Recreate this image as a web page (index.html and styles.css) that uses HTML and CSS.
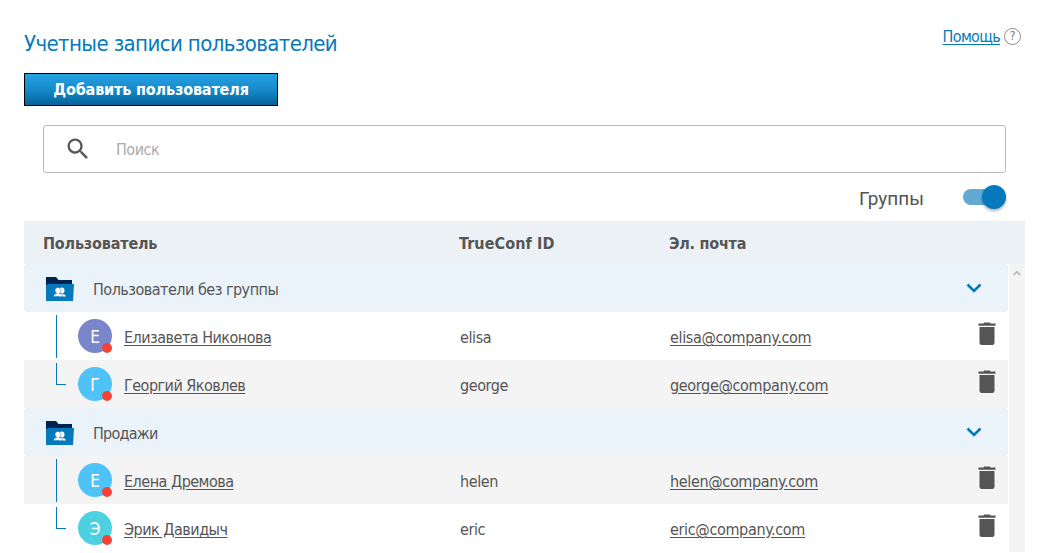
FILE: index.html
```html
<!DOCTYPE html>
<html lang="ru">
<head>
<meta charset="utf-8">
<title>Учетные записи пользователей</title>
<link rel="stylesheet" href="styles.css">
</head>
<body>
<svg class="defs" width="0" height="0" aria-hidden="true">
  <symbol id="trash" viewBox="0 0 18 24"><path fill="#555" d="M.5 1.400h5L6.200.5h5.600l.7.9h5v2.400H.5zM1.500 5h15v15.800a2.200 2.200 0 0 1-2.200 2.200H3.700a2.200 2.200 0 0 1-2.200-2.200z"/></symbol>
  <symbol id="folder" viewBox="0 0 28 24"><path fill="#002450" d="M0 0h10l2.500 3H26v6H0z"/><path fill="#0579bc" d="M1.500 7H28l-1 17H0V9z"/><g fill="#fff"><ellipse cx="15.800" cy="13.600" rx="2.700" ry="3"/><path d="M13 19.400v-2.500h3c2.600 0 3.800 1.100 3.800 2.500z"/></g><path fill="#fff" stroke="#0579bc" stroke-width=".5" d="M7.600 19.600c0-2 1.400-2.800 3.200-3.100-1.400-1-1.700-2-1.700-3 0-1.900 1-3.100 2.800-3.100s2.800 1.200 2.800 3.100c0 1-.3 2-1.500 3 2.200.3 3.600 1.100 3.600 3.100z"/></symbol>
  <symbol id="chevron" viewBox="0 0 16 10"><path fill="none" stroke="#0579bc" stroke-width="2.600" d="M1.500 1.500 8 8l6.500-6.500"/></symbol>
</svg>
<main class="page">
  <header class="top">
    <h1 class="title">Учетные записи пользователей</h1>
    <div class="help"><a href="#" class="help-link">Помощь</a><span class="help-icon">?</span></div>
  </header>
  <button class="add">Добавить пользователя</button>
  <div class="search">
    <svg class="search-icon" viewBox="0 0 24 24"><path fill="#555" d="M15.500 14h-.79l-.28-.27A6.470 6.470 0 0 0 16 9.500 6.500 6.500 0 1 0 9.500 16c1.610 0 3.090-.59 4.230-1.570l.27.28v.79l5 4.990L20.490 19l-4.990-5zm-6 0C7.010 14 5 11.990 5 9.500S7.010 5 9.500 5 14 7.010 14 9.500 11.990 14 9.500 14z"/></svg>
    <span class="placeholder">Поиск</span>
  </div>
  <div class="groups"><span class="groups-label">Группы</span><span class="switch"><span class="knob"></span></span></div>
  <section class="table">
    <div class="row head"><span class="h-user">Пользователь</span><span class="h-id">TrueConf ID</span><span class="h-mail">Эл. почта</span></div>
    <div class="body">
      <div class="list">
        <div class="group"><svg class="folder"><use href="#folder"/></svg><span class="group-name">Пользователи без группы</span><svg class="chevron"><use href="#chevron"/></svg></div>
        <div class="row"><span class="user"><i class="branch"></i><span class="avatar indigo">Е</span><a class="name">Елизавета Никонова</a></span><span class="id">elisa</span><a class="mail">elisa@company.com</a><svg class="trash"><use href="#trash"/></svg></div>
        <div class="row grey"><span class="user"><i class="branch last"></i><span class="avatar blue">Г</span><a class="name">Георгий Яковлев</a></span><span class="id">george</span><a class="mail">george@company.com</a><svg class="trash"><use href="#trash"/></svg></div>
        <div class="group"><svg class="folder"><use href="#folder"/></svg><span class="group-name tight">Продажи</span><svg class="chevron"><use href="#chevron"/></svg></div>
        <div class="row grey"><span class="user"><i class="branch"></i><span class="avatar blue">Е</span><a class="name">Елена Дремова</a></span><span class="id">helen</span><a class="mail">helen@company.com</a><svg class="trash"><use href="#trash"/></svg></div>
        <div class="row"><span class="user"><i class="branch last"></i><span class="avatar cyan">Э</span><a class="name">Эрик Давидыч</a></span><span class="id">eric</span><a class="mail">eric@company.com</a><svg class="trash"><use href="#trash"/></svg></div>
      </div>
      <div class="scrollbar"><svg width="8" height="6" viewBox="0 0 8 6"><path d="M.7 5 4 1.700 7.300 5" fill="none" stroke="#bbb" stroke-width="1.800"/></svg></div>
    </div>
  </section>
</main>
</body>
</html>
```
FILE: styles.css
```css
* { box-sizing: border-box; }
body { margin: 0; background: #fff; color: #555; font: 16px/20px "DejaVu Sans Condensed", "DejaVu Sans", sans-serif; font-stretch: condensed; overflow: hidden; }
.defs { position: absolute; }
.page { width: 1049px; height: 553px; padding: 26px 24px 0; overflow: hidden; }
.top { display: flex; justify-content: space-between; height: 47px; }
.title { margin: 4px 0 0; color: #0579bc; font-size: 22px; line-height: 28px; font-weight: 400; letter-spacing: -.61px; white-space: nowrap; }
.help { display: flex; gap: 4px; margin-right: 4px; }
.help-link { margin-top: 1px; color: #0579bc; letter-spacing: -.65px; text-underline-offset: 2px; }
.help-icon { width: 17px; height: 17px; margin-top: 2px; border: 1px solid #888; border-radius: 50%; font-size: 12px; line-height: 15px; text-align: center; color: #777; }
.add { display: block; width: 254px; height: 33px; padding: 1px 0 0; border: 1px solid #000; background: linear-gradient(#26a1e3, #168bcb 50%, #04639a); color: #fff; font: bold 16px/20px "DejaVu Sans Condensed", "DejaVu Sans", sans-serif; font-stretch: condensed; letter-spacing: -.15px; }
.search { display: flex; align-items: center; width: 963px; height: 48px; margin: 19px 0 0 19px; padding-left: 20px; border: 1px solid #bbb; border-radius: 3px; }
.search-icon { width: 28px; height: 28px; }
.placeholder { margin: 2px 0 0 24px; color: #aaa; letter-spacing: -.5px; }
.groups { display: flex; justify-content: flex-end; align-items: center; height: 48px; padding-right: 19px; }
.groups-label { margin-top: 3px; margin-right: 39px; font: 19px/24px Roboto, sans-serif; }
.switch { width: 43px; height: 16px; border-radius: 8px; background: #62a9d4; }
.knob { display: block; width: 24px; height: 24px; margin: -4px 0 0 19px; border-radius: 50%; background: #0579bc; box-shadow: 0 2px 3px rgba(0,0,0,.3); }
.row { display: grid; grid-template-columns: 436px 210px 304px 34px; align-items: center; height: 48px; }
.head { height: 43px; padding-top: 3px; background: #ecf1f5; font-weight: 700; }
.h-user { padding-left: 19px; letter-spacing: -.18px; }
.h-id, .h-mail { margin-left: -1px; }
.h-id { letter-spacing: .1px; }
.h-mail { letter-spacing: -.25px; }
.body { display: grid; grid-template-columns: 984px 16px; column-gap: 1px; }
.group { display: flex; align-items: center; height: 48px; padding: 0 26px 0 22px; border-radius: 4px; background: #eaf3fa; }
.folder { width: 28px; height: 24px; margin-top: 2px; }
.group-name { margin: 4px auto 0 19px; letter-spacing: -.5px; }
.group-name.tight { letter-spacing: -.75px; }
.chevron { width: 16px; height: 10px; }
.grey { background: #f4f4f4; }
.user { display: flex; align-items: center; height: 48px; padding-left: 32px; }
.branch { width: 10px; height: 43px; margin: 3px 12px 2px 0; border-left: 1px solid #0579bc; }
.branch.last { height: 22px; margin: 0 12px 20px 0; border-bottom: 1px solid #0579bc; }
.avatar { position: relative; width: 34px; height: 34px; border-radius: 50%; color: #fff; font-size: 17px; line-height: 36px; text-align: center; }
.avatar::after { content: ""; position: absolute; right: 0; bottom: 0; width: 10px; height: 10px; border-radius: 50%; background: #f44336; }
.indigo { background: #7986cb; }
.blue { background: #4fc3f7; }
.cyan { background: #4dd0e1; }
.name { margin: 4px 0 0 12px; letter-spacing: -.51px; }
.name, .mail { text-decoration: underline; text-underline-offset: 2px; }
.mail { justify-self: start; letter-spacing: -.34px; }
.id, .mail { margin-top: 4px; }
.id { letter-spacing: -.4px; }
.trash { width: 18px; height: 24px; margin: -4px 0 0 3.5px; }
.scrollbar { background: #f4f4f4; text-align: center; line-height: 0; padding-top: 6px; }
```
